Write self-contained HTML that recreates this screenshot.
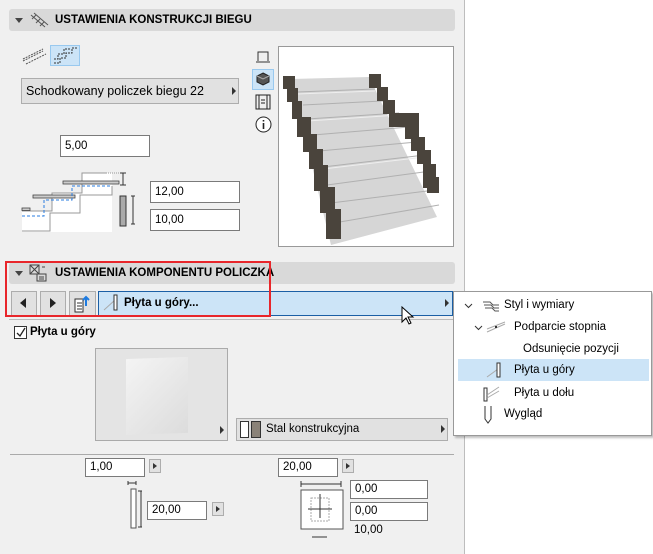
<!DOCTYPE html>
<html><head><meta charset="utf-8"><style>
*{box-sizing:border-box;margin:0;padding:0}
body{width:653px;height:554px;background:#fff;font-family:"Liberation Sans",sans-serif;font-size:11px;color:#000;position:relative;overflow:hidden}
.a{position:absolute}
#panel{left:0;top:0;width:465px;height:554px;background:#f0f0f0;border-right:1px solid #bdbdbd}
.hdr{left:9px;width:446px;height:22px;background:#d9d9d9;border-radius:3px;font-weight:bold;font-size:11.5px;line-height:22px}
.inp{background:#fff;border:1px solid #7a7a7a;height:22px;line-height:20px;padding-left:4px;font-size:11.5px}
.btn{background:#e1e1e1;border:1px solid #adadad}
.sb{width:12px;height:18px;background:#e1e1e1;border:1px solid #adadad}
.sb:after{content:"";position:absolute;left:3px;top:3px;border-left:4px solid #333;border-top:3.5px solid transparent;border-bottom:3.5px solid transparent}
.tri{width:0;height:0;border-left:4px solid #333;border-top:4px solid transparent;border-bottom:4px solid transparent}
.mi{left:0;width:196px;height:22px;line-height:22px;font-size:11.5px}
</style></head><body>
<div id="panel" class="a"></div>
<div class="a hdr" style="top:9px">
 <div class="a" style="left:6px;top:9px;border-top:5px solid #444;border-left:4px solid transparent;border-right:4px solid transparent"></div>
 <svg class="a" style="left:20px;top:2px" width="20" height="18"><path d="M2 4l14 12M5 2l14 12M3 8l4-4M7 12l4-4M11 15l4-4" stroke="#555" fill="none"/></svg>
 <span class="a" style="left:46px">USTAWIENIA KONSTRUKCJI BIEGU</span>
</div>
<svg class="a" style="left:22px;top:45px" width="26" height="20"><path d="M1 14l20-10M4 19l20-10M1 16l20-10" stroke="#555" fill="none" stroke-dasharray="2 1"/></svg>
<div class="a" style="left:50px;top:45px;width:30px;height:21px;background:#cce4f7;border:1px solid #99c9ef"></div>
<svg class="a" style="left:53px;top:47px" width="26" height="18"><path d="M1 16h6v-5h6v-5h6v-5h6M1 12h4v-5h6v-5h6" stroke="#333" fill="none" stroke-dasharray="2 1"/></svg>
<div class="a btn" style="left:21px;top:78px;width:218px;height:26px;font-size:12.5px;line-height:24px;padding-left:4px">Schodkowany policzek biegu 22</div>
<div class="a tri" style="left:232px;top:87px"></div>
<div class="a inp" style="left:60px;top:135px;width:90px">5,00</div>
<!-- stair diagram -->
<svg class="a" style="left:20px;top:168px" width="118" height="64">
<path d="M2 63V43h30V25h30V5h30v63H2z" fill="#fff" stroke="none"/>
<path d="M2 43h30V25h30V5h24" stroke="#999" fill="none"/>
<path d="M2 63h28V45h30V27h32V18" stroke="#999" fill="none"/>
<rect x="2" y="40" width="8" height="2.5" fill="#ccc" stroke="#444" stroke-width=".8"/>
<rect x="13" y="27" width="42" height="3" fill="#ccc" stroke="#444" stroke-width=".8"/>
<rect x="43" y="13" width="56" height="3" fill="#ccc" stroke="#444" stroke-width=".8"/>
<path d="M2 48h22V32h28V18h38" stroke="#2a7de1" fill="none" stroke-dasharray="3 2"/>
<path d="M84 5h18M84 5v0" stroke="#999" stroke-dasharray="1 1"/>
<path d="M103 5v12M100 5h6M100 17h6" stroke="#333"/>
<rect x="100" y="28" width="6" height="30" fill="#aaa" stroke="#333"/>
<path d="M113 28v28M111 28h4M111 56h4" stroke="#333"/>
</svg>
<div class="a inp" style="left:150px;top:181px;width:90px">12,00</div>
<div class="a inp" style="left:150px;top:209px;width:90px">10,00</div>
<svg class="a" style="left:255px;top:50px" width="16" height="14"><path d="M3 11V2h10v9M1 12h14" stroke="#333" fill="none"/></svg>
<div class="a" style="left:252px;top:69px;width:22px;height:21px;background:#cce4f7;border:1px solid #99c9ef"></div>
<svg class="a" style="left:256px;top:72px" width="14" height="14"><path d="M7 1l6 3v6l-6 3-6-3V4z" fill="#555" stroke="#222"/><path d="M1 4l6 3 6-3" stroke="#aaa" fill="none"/></svg>
<svg class="a" style="left:255px;top:94px" width="16" height="16"><rect x="1" y="1" width="14" height="14" fill="none" stroke="#222"/><path d="M4 1v14M12 1v14M6 6h4M6 9h4" stroke="#222"/></svg>
<svg class="a" style="left:255px;top:116px" width="17" height="17"><circle cx="8.5" cy="8.5" r="7.5" fill="#fff" stroke="#222"/><path d="M8.5 7v6M8.5 4v1.5" stroke="#222" stroke-width="1.6"/></svg>
<!-- preview -->
<div class="a" style="left:278px;top:46px;width:176px;height:201px;background:#fff;border:1px solid #999"></div>
<svg class="a" style="left:279px;top:47px" width="174" height="200">
<path d="M12 32L90 30L158 170L52 198Z" fill="#d6d6d6"/>
<path d="M18 45L96 42M24 58L104 54M28 72L120 66M34 88L130 80M40 104L138 95M44 120L146 108M48 138L152 124M52 156L156 143M55 176L160 158" stroke="#b0b0b0"/>
<path d="M18 47L96 44M28 74L120 68M44 122L146 110" stroke="#eee"/>
<g fill="#4a443c">
<rect x="4" y="29" width="12" height="13"/><rect x="8" y="41" width="11" height="14"/><rect x="13" y="54" width="10" height="18"/><rect x="18" y="70" width="14" height="20"/><rect x="24" y="87" width="14" height="18"/><rect x="30" y="102" width="14" height="20"/><rect x="35" y="118" width="14" height="26"/><rect x="41" y="140" width="15" height="26"/><rect x="47" y="162" width="15" height="30"/>
<rect x="90" y="27" width="12" height="14"/><rect x="98" y="40" width="11" height="14"/><rect x="104" y="53" width="12" height="14"/><rect x="110" y="66" width="30" height="14"/><rect x="126" y="78" width="14" height="14"/><rect x="132" y="90" width="14" height="14"/><rect x="138" y="103" width="14" height="14"/><rect x="144" y="117" width="13" height="24"/><rect x="148" y="130" width="12" height="16"/>
</g>
</svg>
<!-- header 2 -->
<div class="a hdr" style="top:262px">
 <div class="a" style="left:6px;top:9px;border-top:5px solid #444;border-left:4px solid transparent;border-right:4px solid transparent"></div>
 <svg class="a" style="left:20px;top:2px" width="18" height="18"><rect x="1" y="1" width="9" height="9" fill="none" stroke="#444"/><path d="M1 1l9 9M10 1l-9 9M8 10h9v7H8zM10 13h5M10 15h5M13 3h3" stroke="#444" fill="none"/></svg>
 <span class="a" style="left:46px">USTAWIENIA KOMPONENTU POLICZKA</span>
</div>
<div class="a btn" style="left:11px;top:291px;width:26px;height:25px"></div>
<div class="a" style="left:20px;top:298px;border-right:6px solid #222;border-top:5px solid transparent;border-bottom:5px solid transparent"></div>
<div class="a btn" style="left:40px;top:291px;width:26px;height:25px"></div>
<div class="a" style="left:50px;top:298px;border-left:6px solid #222;border-top:5px solid transparent;border-bottom:5px solid transparent"></div>
<div class="a btn" style="left:69px;top:291px;width:27px;height:25px"></div>
<svg class="a" style="left:73px;top:294px" width="20" height="20"><path d="M2 5h8v13H2zM4 9h5M4 12h5M4 15h5" stroke="#333" fill="#fff"/><path d="M13 12V3M10 6l3-3 3 3" stroke="#1e7be0" stroke-width="2" fill="none"/></svg>
<div class="a" style="left:98px;top:291px;width:355px;height:25px;background:#cce4f7;border:1px solid #1b5fa5"></div>
<svg class="a" style="left:103px;top:294px" width="16" height="18"><path d="M1 16L12 6" stroke="#aaa"/><rect x="11" y="1" width="3" height="15" fill="#fff" stroke="#333"/></svg>
<span class="a" style="left:124px;top:297px;font-weight:bold;font-size:11.5px">Płyta u góry...</span>
<div class="a tri" style="left:445px;top:299px"></div>
<div class="a" style="left:9px;top:319px;width:444px;height:1px;background:#bbb"></div>
<div class="a" style="left:5px;top:261px;width:266px;height:56px;border:2px solid #e8262b"></div>
<svg class="a" style="left:401px;top:306px" width="14" height="20"><path d="M1 1v15l4-4 3 6 2-1-3-6h5z" fill="#fff" stroke="#000"/></svg>
<div class="a" style="left:14px;top:326px;width:13px;height:13px;background:#fff;border:1px solid #333"></div>
<svg class="a" style="left:15px;top:327px" width="11" height="11"><path d="M2 6l3 3 5-8" stroke="#222" fill="none" stroke-width="1.3"/></svg>
<span class="a" style="left:30px;top:326px;font-weight:bold;font-size:11.5px">Płyta u góry</span>
<div class="a" style="left:95px;top:348px;width:133px;height:93px;background:#e4e4e4;border:1px solid #aaa"></div>
<div class="a" style="left:126px;top:358px;width:62px;height:76px;background:linear-gradient(135deg,#f4f4f4,#dcdcdc);transform:skewY(-2deg)"></div>
<div class="a tri" style="left:220px;top:426px"></div>
<div class="a btn" style="left:236px;top:418px;width:212px;height:23px"></div>
<div class="a" style="left:240px;top:421px;width:9px;height:17px;background:#fff;border:1px solid #333"></div>
<div class="a" style="left:251px;top:421px;width:10px;height:17px;background:#8a8278;border:1px solid #333"></div>
<span class="a" style="left:266px;top:423px;font-size:11.5px">Stal konstrukcyjna</span>
<div class="a tri" style="left:441px;top:425px"></div>
<div class="a" style="left:10px;top:454px;width:444px;height:1px;background:#aaa"></div>
<div class="a inp" style="left:85px;top:458px;width:60px;height:19px;line-height:17px">1,00</div>
<div class="a sb" style="left:149px;top:459px;height:14px"></div>
<div class="a inp" style="left:278px;top:458px;width:60px;height:19px;line-height:17px">20,00</div>
<div class="a sb" style="left:342px;top:459px;height:14px"></div>
<svg class="a" style="left:126px;top:480px" width="20" height="50"><path d="M2 3h8M2 1v4M10 1v4" stroke="#333"/><rect x="5" y="9" width="5" height="39" fill="#fff" stroke="#555"/><path d="M15 11v36M12 11h4M12 47h4" stroke="#333"/></svg>
<div class="a inp" style="left:147px;top:501px;width:60px;height:19px;line-height:17px">20,00</div>
<div class="a sb" style="left:212px;top:502px;height:14px"></div>
<svg class="a" style="left:298px;top:480px" width="50" height="60"><path d="M3 4h40M3 1v6M43 1v6" stroke="#333"/><rect x="3" y="10" width="42" height="39" fill="#fff" stroke="#555"/><rect x="13" y="18" width="18" height="23" fill="none" stroke="#aaa" stroke-dasharray="2 1"/><path d="M22 14v24M10 29h24" stroke="#333"/><path d="M14 57h15" stroke="#333"/></svg>
<div class="a inp" style="left:350px;top:480px;width:78px;height:19px;line-height:17px">0,00</div>
<div class="a inp" style="left:350px;top:502px;width:78px;height:19px;line-height:17px">0,00</div>
<span class="a" style="left:354px;top:524px;font-size:11.5px">10,00</span>
<div class="a" style="left:453px;top:291px;width:199px;height:145px;background:#fff;border:1px solid #999;box-shadow:2px 2px 2px rgba(0,0,0,.25)">
 <div class="a mi" style="top:2px"><svg class="a" style="left:10px;top:9px" width="9" height="6"><path d="M1 1l3.5 3.5L8 1" stroke="#333" fill="none"/></svg><span class="a" style="left:50px">Styl i wymiary</span><svg class="a" style="left:28px;top:5px" width="18" height="13"><path d="M1 3h7l3 3h6M2 6h7l3 3h5M3 9h7l3 3h4" stroke="#555" fill="none"/></svg></div>
 <div class="a mi" style="top:24px"><svg class="a" style="left:20px;top:9px" width="9" height="6"><path d="M1 1l3.5 3.5L8 1" stroke="#333" fill="none"/></svg><svg class="a" style="left:32px;top:5px" width="20" height="12"><path d="M1 11L19 3M1 8L19 1" stroke="#aaa"/><rect x="9" y="5" width="2" height="2" fill="#333"/></svg><span class="a" style="left:60px">Podparcie stopnia</span></div>
 <div class="a mi" style="top:46px"><span class="a" style="left:69px">Odsunięcie pozycji</span></div>
 <div class="a mi" style="top:67px;left:4px;width:191px;background:#cce4f7"><svg class="a" style="left:28px;top:3px" width="16" height="17"><path d="M1 15L12 7" stroke="#aaa"/><rect x="11" y="1" width="3" height="14" fill="#fff" stroke="#333"/></svg><span class="a" style="left:56px">Płyta u góry</span></div>
 <div class="a mi" style="top:90px"><svg class="a" style="left:29px;top:3px" width="18" height="17"><rect x="1" y="3" width="3" height="13" fill="#fff" stroke="#333"/><path d="M4 10L16 2M4 13L16 6" stroke="#aaa"/></svg><span class="a" style="left:60px">Płyta u dołu</span></div>
 <div class="a mi" style="top:111px"><svg class="a" style="left:29px;top:2px" width="10" height="19"><path d="M2 1v13l3 4 3-4V1" stroke="#333" fill="#fff"/></svg><span class="a" style="left:50px">Wygląd</span></div>
</div>
</body></html>
